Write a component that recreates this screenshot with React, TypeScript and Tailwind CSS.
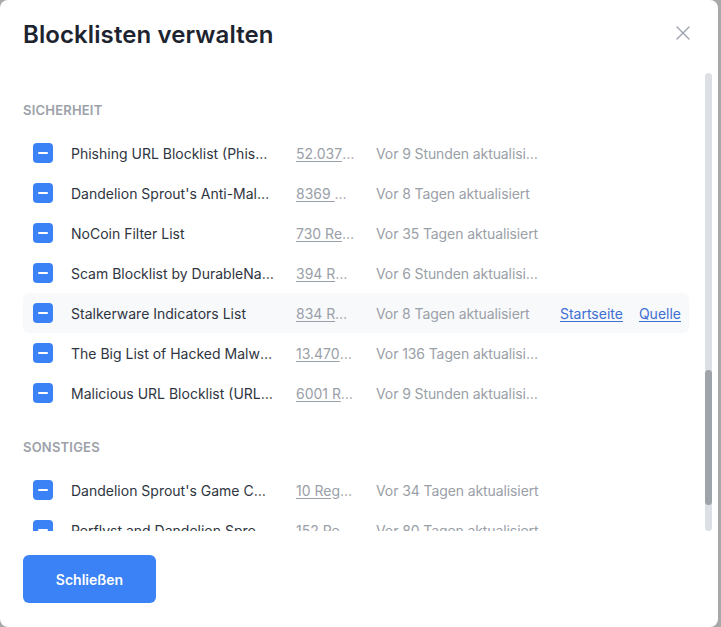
import React from "react";

type Row = { name: string; count: string; updated: string; hover?: boolean };

const security: Row[] = [
  { name: "Phishing URL Blocklist (PhishTank and OpenPhish)", count: "52.037 Regeln", updated: "Vor 9 Stunden aktualisiert" },
  { name: "Dandelion Sprout's Anti-Malware List", count: "8369 Regeln", updated: "Vor 8 Tagen aktualisiert" },
  { name: "NoCoin Filter List", count: "730 Regeln", updated: "Vor 35 Tagen aktualisiert" },
  { name: "Scam Blocklist by DurableNapkin", count: "394 Regeln", updated: "Vor 6 Stunden aktualisiert" },
  { name: "Stalkerware Indicators List", count: "834 Regeln", updated: "Vor 8 Tagen aktualisiert", hover: true },
  { name: "The Big List of Hacked Malware Web Sites", count: "13.470 Regeln", updated: "Vor 136 Tagen aktualisiert" },
  { name: "Malicious URL Blocklist (URLHaus)", count: "6001 Regeln", updated: "Vor 9 Stunden aktualisiert" },
];

const other: Row[] = [
  { name: "Dandelion Sprout's Game Console Adblock List", count: "10 Regeln", updated: "Vor 34 Tagen aktualisiert" },
  { name: "Perflyst and Dandelion Sprout's Smart-TV Blocklist", count: "152 Regeln", updated: "Vor 80 Tagen aktualisiert" },
];

function Check() {
  return (
    <div className="w-5 h-5 shrink-0 rounded-[4px] bg-[#3b82f6] flex items-center justify-center">
      <div className="w-[10px] h-[2px] bg-white rounded-full" />
    </div>
  );
}

function ListRow({ r }: { r: Row }) {
  return (
    <div className={`h-10 flex items-center pl-[10px] pr-2 rounded-md ${r.hover ? "bg-[#f8f9fb]" : ""}`}>
      <Check />
      <div className="ml-[18px] w-[203px] truncate text-[14px] text-[#2f3541]">{r.name}</div>
      <div className="ml-[22px] w-[59px] truncate text-[14px] text-[#9aa0a8] underline underline-offset-2">{r.count}</div>
      <div className="ml-[21px] w-[164px] truncate text-[14px] text-[#9aa0a8] tracking-[-0.1px]">{r.updated}</div>
      {r.hover && (
        <div className="ml-[20px] flex gap-4 text-[14px] text-[#3e6fd2]">
          <span className="underline underline-offset-2">Startseite</span>
          <span className="underline underline-offset-2">Quelle</span>
        </div>
      )}
    </div>
  );
}

function Heading({ children, className = "" }: { children: React.ReactNode; className?: string }) {
  return (
    <div className={`h-5 flex items-center text-[13px] font-semibold tracking-[0.2px] text-[#9ca1a9] uppercase ${className}`}>
      {children}
    </div>
  );
}

export default function App() {
  return (
    <div
      className="w-[721px] h-[627px] bg-[#a8a8a8] overflow-hidden"
      style={{ fontFamily: "Inter, 'Noto Sans', sans-serif" }}
    >
      <div className="w-[718px] h-[627px] bg-white rounded-lg flex flex-col">
        <div className="h-[72px] px-[23px] pt-[19px] flex items-start justify-between">
          <h1 className="text-[24px] leading-8 font-semibold text-[#1d2430] tracking-[0.1px]">Blocklisten verwalten</h1>
          <svg className="mt-[7px] mr-[5px]" width="14" height="14" viewBox="0 0 14 14" fill="none" stroke="#9ca3af" strokeWidth="1.4" strokeLinecap="round">
            <path d="M1 1L13 13M13 1L1 13" />
          </svg>
        </div>
        <div className="relative h-[459px] overflow-hidden pl-[23px] pr-[29px]">
          <div className="pt-[29px]">
            <Heading>Sicherheit</Heading>
            <div className="mt-[12px]">
              {security.map((r) => (
                <ListRow key={r.name} r={r} />
              ))}
            </div>
            <Heading className="mt-[25px]">Sonstiges</Heading>
            <div className="mt-[12px]">
              {other.map((r) => (
                <ListRow key={r.name} r={r} />
              ))}
            </div>
          </div>
          <div className="absolute right-[6px] top-[1px] bottom-0 w-[7px] rounded-full bg-[#dcdfe3]">
            <div className="absolute left-0 right-0 top-[297px] h-[135px] rounded-full bg-[#9ea4aa]" />
          </div>
        </div>
        <div className="px-[23px] pt-[24px]">
          <button className="w-[133px] h-12 rounded-md bg-[#3b82f6] text-white text-[14px] font-semibold">
            Schließen
          </button>
        </div>
      </div>
    </div>
  );
}
